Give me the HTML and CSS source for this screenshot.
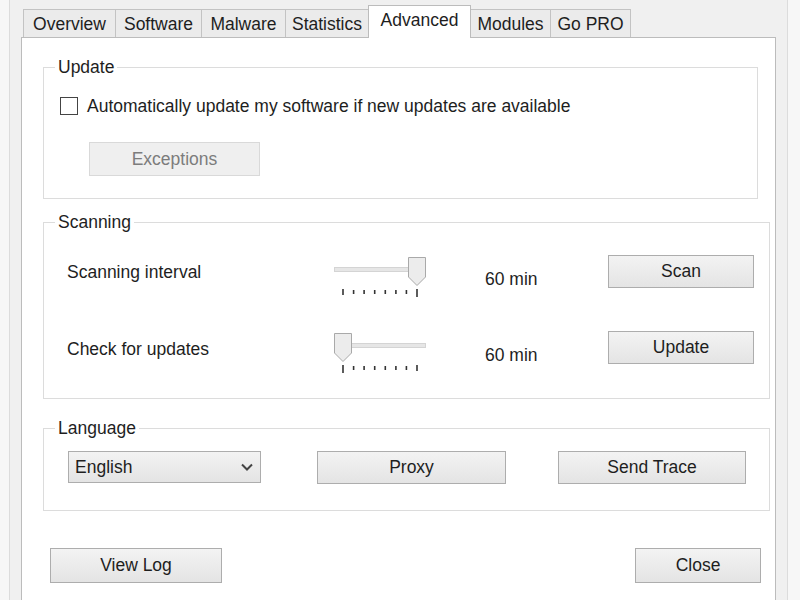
FILE: index.html
```html
<!DOCTYPE html>
<html lang="en">
<head>
    <meta charset="UTF-8">
    <title>Settings - Advanced</title>
    <link rel="stylesheet" href="styles.css">
</head>
<body>
    <div class="window">
        <div class="tabs">
            <div class="tab">Overview</div>
            <div class="tab">Software</div>
            <div class="tab">Malware</div>
            <div class="tab">Statistics</div>
            <div class="tab active">Advanced</div>
            <div class="tab">Modules</div>
            <div class="tab">Go PRO</div>
        </div>

        <div class="tab-page">
            <fieldset class="group group-update">
                <legend>Update</legend>
                <div class="group-body">
                    <label class="check-row">
                        <span class="checkbox"></span>
                        <span>Automatically update my software if new updates are available</span>
                    </label>
                    <div class="btn btn-disabled btn-exceptions">Exceptions</div>
                </div>
            </fieldset>

            <fieldset class="group group-scan">
                <legend>Scanning</legend>
                <div class="group-body">
                    <div class="scan-row">
                        <span class="row-label">Scanning interval</span>
                        <svg class="slider" width="94" height="41" viewBox="0 0 94 41">
                            <rect x="0.5" y="10.5" width="91" height="4" fill="#e6e6e6" stroke="#d4d4d4"/>
                            <g stroke="#333" stroke-width="1.6">
                                <line x1="9" y1="32" x2="9" y2="38"/>
                                <line x1="19.6" y1="33" x2="19.6" y2="37"/>
                                <line x1="30.1" y1="33" x2="30.1" y2="37"/>
                                <line x1="40.7" y1="33" x2="40.7" y2="37"/>
                                <line x1="51.3" y1="33" x2="51.3" y2="37"/>
                                <line x1="61.9" y1="33" x2="61.9" y2="37"/>
                                <line x1="72.4" y1="33" x2="72.4" y2="37"/>
                                <line x1="83" y1="32" x2="83" y2="40"/>
                            </g>
                            <path d="M74.5 0.5 H91.5 V20 L83 28.5 L74.5 20 Z" fill="#ececec" stroke="#a9a9a9"/>
                        </svg>
                        <span class="row-value">60 min</span>
                        <div class="btn btn-row">Scan</div>
                    </div>
                    <div class="scan-row">
                        <span class="row-label">Check for updates</span>
                        <svg class="slider" width="94" height="41" viewBox="0 0 94 41">
                            <rect x="0.5" y="10.5" width="91" height="4" fill="#e6e6e6" stroke="#d4d4d4"/>
                            <g stroke="#333" stroke-width="1.6">
                                <line x1="9" y1="32" x2="9" y2="40"/>
                                <line x1="19.6" y1="33" x2="19.6" y2="37"/>
                                <line x1="30.1" y1="33" x2="30.1" y2="37"/>
                                <line x1="40.7" y1="33" x2="40.7" y2="37"/>
                                <line x1="51.3" y1="33" x2="51.3" y2="37"/>
                                <line x1="61.9" y1="33" x2="61.9" y2="37"/>
                                <line x1="72.4" y1="33" x2="72.4" y2="37"/>
                                <line x1="83" y1="32" x2="83" y2="38"/>
                            </g>
                            <path d="M0.5 0.5 H17.5 V20 L9 28.5 L0.5 20 Z" fill="#ececec" stroke="#a9a9a9"/>
                        </svg>
                        <span class="row-value">60 min</span>
                        <div class="btn btn-row">Update</div>
                    </div>
                </div>
            </fieldset>

            <fieldset class="group group-lang">
                <legend>Language</legend>
                <div class="group-body lang-row">
                    <div class="combo">
                        <span>English</span>
                        <svg width="12" height="8" viewBox="0 0 12 8">
                            <path d="M1 1.5 L6 6.5 L11 1.5" fill="none" stroke="#444" stroke-width="2"/>
                        </svg>
                    </div>
                    <div class="btn btn-proxy">Proxy</div>
                    <div class="btn btn-trace">Send Trace</div>
                </div>
            </fieldset>

            <div class="footer">
                <div class="btn btn-log">View Log</div>
                <div class="btn btn-close">Close</div>
            </div>
        </div>
    </div>
</body>
</html>
```

FILE: styles.css
```css
* {
    box-sizing: border-box;
}

html, body {
    height: 600px;
    overflow: hidden;
}

body {
    margin: 0;
    background: #f7f7f7;
    font-family: "Liberation Sans", Arial, sans-serif;
    font-size: 17.5px;
    color: #1e1e1e;
}

.window {
    margin-left: 9px;
    width: 779px;
    height: 600px;
    padding: 0 11px;
    overflow: hidden;
    background: #f0f0f0;
    border-left: 1px solid #dcdcdc;
    border-right: 1px solid #dcdcdc;
}

/* tab strip */
.tabs {
    display: flex;
    align-items: flex-end;
    padding: 6px 0 0 2px;
    height: 37px;
}

.tab {
    height: 28px;
    padding-top: 3px;
    line-height: 22px;
    text-align: center;
    background: #ebebeb;
    border: 1px solid #c3c3c3;
    border-bottom: none;
    margin-right: -1px;
    white-space: nowrap;
}

.tab:nth-child(1) { width: 93px; }
.tab:nth-child(2) { width: 87px; }
.tab:nth-child(3) { width: 85px; }
.tab:nth-child(4) { width: 84px; }
.tab:nth-child(5) { width: 103px; }
.tab:nth-child(6) { width: 81px; }
.tab:nth-child(7) { width: 81px; }

.tab.active {
    height: 33px;
    margin-bottom: -1px;
    background: #fff;
    border-color: #bcbcbc;
    position: relative;
    z-index: 1;
}

.tab-page {
    height: 563px;
    background: #fff;
    border: 1px solid #bcbcbc;
    border-bottom: none;
    padding: 19px 5px 0 21px;
}

/* group boxes */
.group {
    margin: 0;
    padding: 0;
    border: 1px solid #dcdcdc;
    min-width: 0;
}

.group legend {
    margin-left: 11px;
    padding: 0 3px;
    line-height: 20px;
}

.group-update {
    margin-right: 12px;
}

.group-update .group-body {
    padding: 18px 16px 22px;
}

.check-row {
    display: flex;
    align-items: center;
    gap: 9px;
    height: 22px;
}

.checkbox {
    width: 18px;
    height: 18px;
    border: 1px solid #444;
    background: #fff;
}

.btn {
    display: flex;
    align-items: center;
    justify-content: center;
    height: 33px;
    background: linear-gradient(#f3f3f3, #e4e4e4);
    border: 1px solid #adadad;
    white-space: nowrap;
}

.btn-disabled {
    background: #efefef;
    border-color: #d9d9d9;
    color: #7c7c7c;
}

.btn-exceptions {
    width: 171px;
    height: 34px;
    margin: 25px 0 0 29px;
}

.group-scan {
    margin-top: 13px;
}

.group-scan .group-body {
    padding: 23px 0 25px 23px;
}

.scan-row {
    display: grid;
    grid-template-columns: 267px 151px 123px 146px;
    align-items: start;
    height: 42px;
}

.scan-row + .scan-row {
    margin-top: 34px;
}

.row-label {
    margin-top: 7px;
    line-height: 20px;
}

.scan-row + .scan-row .row-label {
    margin-top: 8px;
}

.slider {
    display: block;
    margin-top: 2px;
}

.row-value {
    margin-top: 14px;
    line-height: 20px;
}

.group-lang {
    margin-top: 19px;
}

.lang-row {
    display: flex;
    align-items: flex-start;
    padding: 13px 0 26px 24px;
}

.combo {
    width: 193px;
    height: 32px;
    display: flex;
    align-items: center;
    justify-content: space-between;
    padding: 0 7px 0 6px;
    background: linear-gradient(#f3f3f3, #e4e4e4);
    border: 1px solid #adadad;
}

.btn-proxy {
    width: 189px;
    margin-left: 56px;
}

.btn-trace {
    width: 188px;
    margin-left: 52px;
}

.footer {
    display: flex;
    justify-content: space-between;
    margin: 37px 9px 0 7px;
}

.btn-log {
    width: 172px;
    height: 35px;
}

.btn-close {
    width: 126px;
    height: 35px;
}
```
